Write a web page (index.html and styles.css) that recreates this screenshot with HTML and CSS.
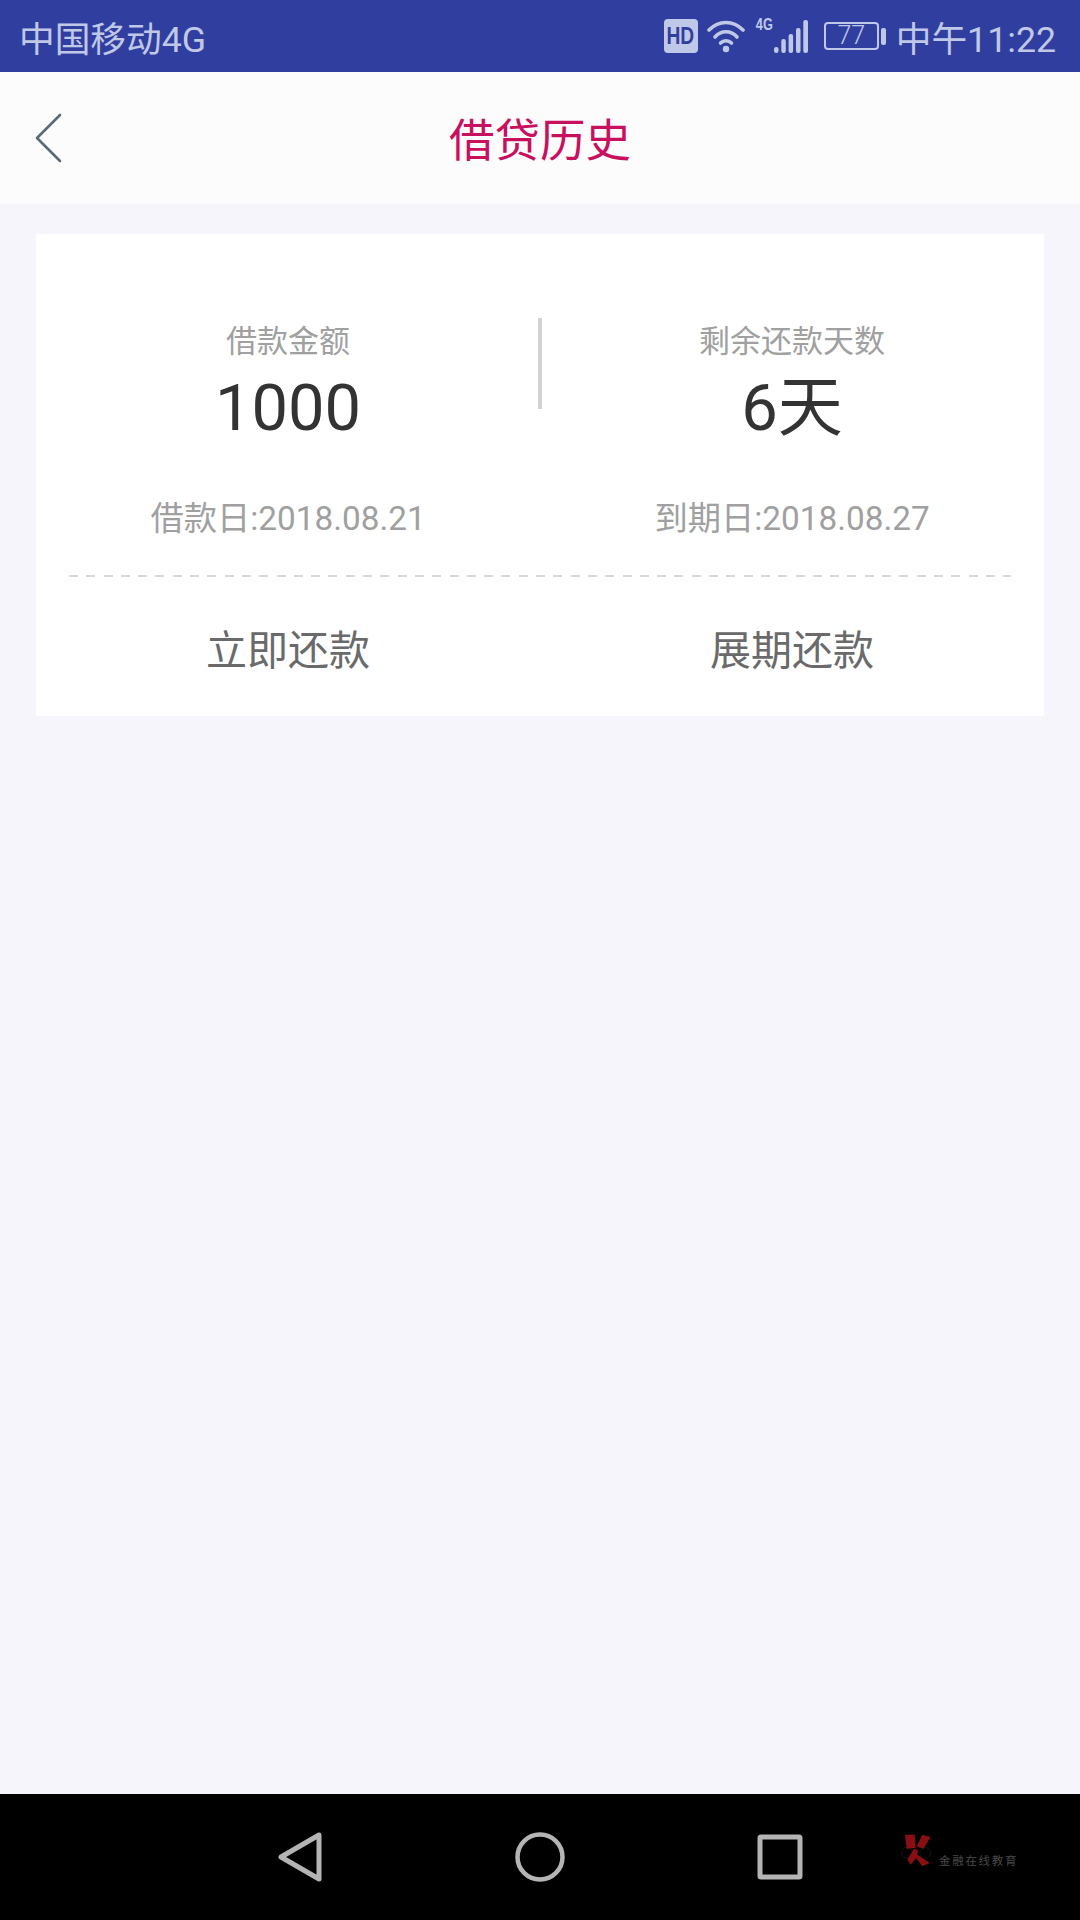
FILE: index.html
```html
<!DOCTYPE html>
<html lang="zh">
<head>
<meta charset="utf-8" />
<title>借贷历史</title>
<link rel="stylesheet" href="styles.css">
</head>
<body>
<div class="phone">
  <div class="status">
    <span class="carrier">中国移动4G</span>
    <div class="status-right">
      <div class="hd"><span>HD</span></div>
      <svg class="ic-wifi" width="38" height="33" viewBox="0 0 38 33" fill="none" stroke="#c0c8e8" stroke-width="3.600" stroke-linecap="round"><path d="M2 10C12 0 26 0 36 10"/><path d="M8 17C14 10 24 10 30 17"/><path d="M13.500 23C16.500 20 21.500 20 24.500 23"/><circle cx="19" cy="29" r="3.200" fill="#c0c8e8" stroke="none"/></svg>
      <div class="net">
        <span class="net-g">4G</span>
        <svg width="34" height="33" viewBox="0 0 34 33" fill="#c0c8e8"><rect x="0" y="27" width="4.500" height="6" rx="2.200"/><rect x="7.300" y="19" width="4.500" height="14" rx="2"/><rect x="14.600" y="14" width="4.500" height="19" rx="2"/><rect x="22" y="8" width="4.500" height="25" rx="2"/><rect x="29.300" y="0" width="4.700" height="33" rx="2"/></svg>
      </div>
      <div class="battery"><div class="batt-body">77</div><div class="batt-nub"></div></div>
      <span class="clock">中午11:22</span>
    </div>
  </div>

  <div class="header">
    <svg class="back" width="30" height="50" viewBox="0 0 30 50" fill="none" stroke="#5b6b75" stroke-width="2.600" stroke-linecap="round" stroke-linejoin="round"><path d="M25 2L2 25L25 48"/></svg>
    <h1 class="title">借贷历史</h1>
  </div>

  <div class="content">
    <div class="card">
      <div class="stats">
        <div class="stat">
          <div class="stat-label">借款金额</div>
          <div class="stat-value">1000</div>
        </div>
        <div class="stat">
          <div class="stat-label">剩余还款天数</div>
          <div class="stat-value">6天</div>
        </div>
      </div>
      <div class="dates">
        <div>借款日:2018.08.21</div>
        <div>到期日:2018.08.27</div>
      </div>
      <div class="dash"></div>
      <div class="actions">
        <div>立即还款</div>
        <div>展期还款</div>
      </div>
    </div>
  </div>

  <div class="navbar">
    <svg width="44" height="50" viewBox="0 0 44 50" fill="none" stroke="#b4b4b4" stroke-width="5" stroke-linejoin="round"><path d="M3 25L41 3V47Z"/></svg>
    <svg width="50" height="50" viewBox="0 0 50 50" fill="none" stroke="#b4b4b4" stroke-width="4.500"><circle cx="25" cy="25" r="22.500"/></svg>
    <svg width="46" height="46" viewBox="0 0 46 46" fill="none" stroke="#b4b4b4" stroke-width="5" stroke-linejoin="round"><rect x="3" y="3" width="40" height="40" rx="1"/></svg>
    <div class="mark">
      <svg width="32" height="34" viewBox="18 28 96 102"><circle cx="38" cy="84" r="16" fill="none" stroke="#1e1e1e" stroke-width="2"/><circle cx="94" cy="84" r="16" fill="none" stroke="#1e1e1e" stroke-width="2"/><path fill="#8a0f14" d="M33 30H62L65 70L38 72Z"/><path fill="#8a0f14" d="M85 30L110 38L88 72L68 65Z"/><path fill="#8a0f14" d="M60 72L72 76L70 90L108 115L85 125L66 100L50 120L40 105Z"/></svg>
      <span class="mark-text">金融在线教育</span>
    </div>
  </div>
</div>
</body>
</html>
```

FILE: styles.css
```css
*{ padding:0; margin:0; box-sizing:border-box; }
body{ font-family:Roboto, "Noto Sans CJK SC", sans-serif; background:#f7f5fc; }
.phone{ width:1080px; height:1920px; display:flex; flex-direction:column; overflow:hidden; }

.status{ height:72px; background:#303f9f; color:#c0c8e8; display:flex; align-items:center; justify-content:space-between; padding:0 24px 0 19px; font-size:35.700px; }
.status-right{ display:flex; align-items:center; }
.hd{ width:34px; height:34px; border-radius:4px; background:#c0c8e8; color:#303f9f; display:flex; align-items:center; justify-content:center; font:bold 24px/34px "Liberation Sans", sans-serif; }
.hd span{ display:block; transform:scaleX(.8); }
.ic-wifi{ margin-left:9px; }
.net{ position:relative; margin-left:29px; width:34px; height:33px; }
.net-g{ position:absolute; left:-21px; top:-4px; transform:scaleX(.75); font:bold 17px/17px "Liberation Sans", sans-serif; }
.battery{ display:flex; align-items:center; margin-left:16px; }
.batt-body{ width:55px; height:28px; border:2px solid #c0c8e8; border-radius:4px; font-size:25px; line-height:24px; text-align:center; font-weight:300; }
.batt-nub{ width:5px; height:17px; background:#c0c8e8; border-radius:2px; margin-left:2px; }
.clock{ margin-left:10px; }

.header{ height:132px; background:#fcfcfd; position:relative; display:flex; align-items:center; justify-content:center; padding-bottom:3px; }
.back{ position:absolute; left:35px; top:41px; }
.title{ font-size:45.500px; font-weight:400; color:#c8105f; }

.content{ flex:1; padding:30px 36px 0; }
.card{ background:#fff; height:482px; padding-top:86px; }
.stats{ display:flex; position:relative; }
.stats::before{ content:""; position:absolute; left:502px; top:-2px; width:4px; height:91px; background:#d2d2d2; }
.stat{ flex:1; text-align:center; }
.stat-label{ font-size:31px; line-height:44px; color:#a0a0a0; }
.stat-value{ font-size:65px; line-height:80px; margin-top:4px; color:#333; }
.dates{ display:flex; margin-top:49px; font-size:33.300px; line-height:44px; color:#a0a0a0; }
.dates div{ flex:1; text-align:center; }
.dash{ margin:34px 33px 0; height:2px; background:repeating-linear-gradient(to right, #d8d8d8 0, #d8d8d8 9px, transparent 9px, transparent 17.300px); }
.actions{ display:flex; padding-top:9px; font-size:41px; line-height:130px; color:#6a6a6a; }
.actions div{ flex:1; text-align:center; }

.navbar{ height:126px; background:#000; position:relative; display:flex; align-items:center; padding-left:278px; gap:192.500px; }
.navbar svg{ flex:none; }
.mark{ position:absolute; left:900px; top:40px; display:flex; align-items:flex-end; }
.mark-text{ font-size:11.500px; line-height:14px; color:#4a4a4a; margin-left:7px; letter-spacing:1.700px; }
```
